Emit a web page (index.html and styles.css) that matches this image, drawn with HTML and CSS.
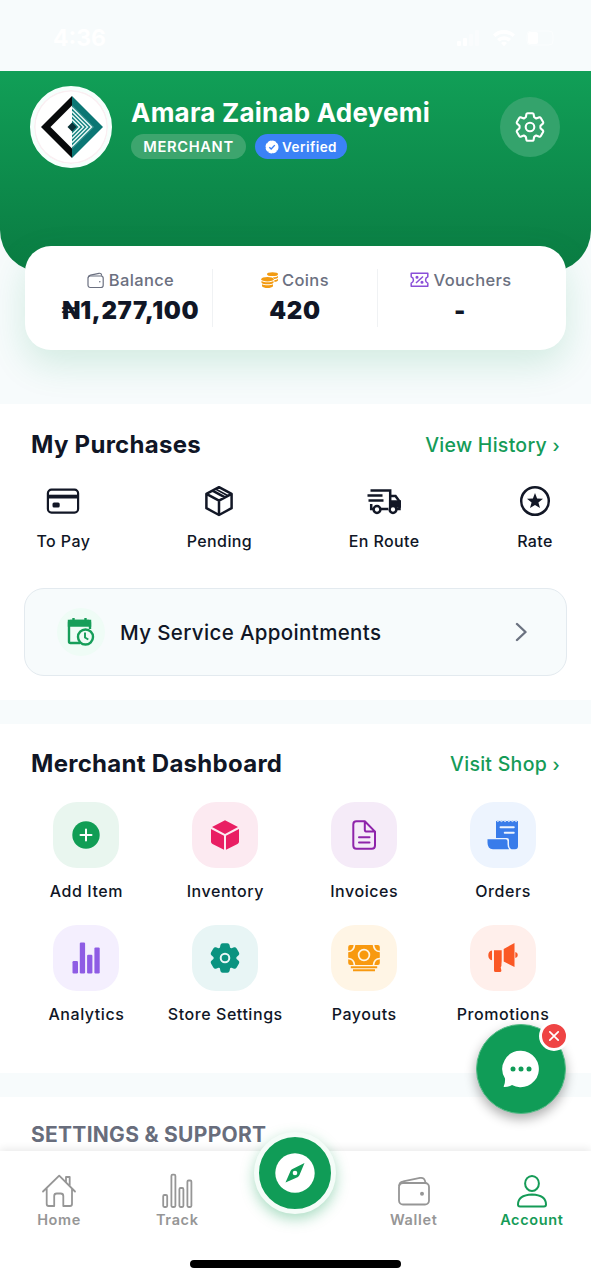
FILE: index.html
```html
<!DOCTYPE html>
<html lang="en">
<head>
<meta charset="utf-8">
<title>Account</title>
<link rel="stylesheet" href="styles.css">
</head>
<body>
<svg class="defs" width="0" height="0" aria-hidden="true">
  <symbol id="cog" viewBox="-16 -16 32 32">
    <path stroke-linejoin="round" d="M-2.400-13.800H2.400Q3.400-13.800 3.600-12.900L4.100-10Q4.300-9.600 6.200-8.500L9.400-9.700Q10.200-9.900 10.800-9L13.100-5Q13.600-4.100 12.900-3.400L10.700-1.500Q10.400-1.100 10.400 0T10.700 1.500L12.900 3.400Q13.600 4.100 13.100 5L10.800 9Q10.200 9.900 9.400 9.700L6.200 8.500Q4.300 9.600 4.100 10L3.600 12.900Q3.400 13.800 2.400 13.800H-2.400Q-3.400 13.800-3.600 12.900L-4.100 10Q-4.300 9.600-6.200 8.500L-9.400 9.700Q-10.200 9.900-10.800 9L-13.100 5Q-13.600 4.100-12.900 3.400L-10.700 1.500Q-10.400 1.100-10.400 0T-10.700-1.500L-12.900-3.400Q-13.600-4.100-13.100-5L-10.800-9Q-10.200-9.900-9.400-9.700L-6.200-8.500Q-4.300-9.600-4.100-10L-3.600-12.900Q-3.400-13.800-2.400-13.800z"/>
  </symbol>
</svg>
<div class="screen">
  <div class="statusbar">
    <span class="time">4:36</span>
    <svg width="98" height="20" viewBox="0 0 98 20" fill="#fff">
      <rect x="0" y="13" width="4" height="5" rx="1"/><rect x="6" y="10" width="4" height="8" rx="1"/>
      <g opacity=".4"><rect x="12" y="6" width="4" height="12" rx="1"/><rect x="18" y="2" width="4" height="16" rx="1"/></g>
      <path d="M36 6.500a16 16 0 0 1 22 0l-2.400 2.600a12.500 12.500 0 0 0-17.200 0z"/><path d="M40 11a10 10 0 0 1 14 0l-2.400 2.500a6.600 6.600 0 0 0-9.200 0z"/><path d="M44 15a4.500 4.500 0 0 1 6 0l-3 3.200z"/>
      <rect x="70" y="3" width="26" height="14" rx="4" fill="none" stroke="#fff" opacity=".5"/><rect x="71" y="4" width="10" height="12" rx="2"/>
    </svg>
  </div>

  <header class="hero">
    <div class="avatar">
      <svg width="62" height="62" viewBox="0 0 62 62">
        <path d="M31 0 62 31 31 62V52.500L52.500 31 31 9.500z" fill="#0b7674"/>
        <path d="M31 9.500 52.500 31 31 52.500z" fill="#11807e"/>
        <g fill="none" stroke="#e8f8f6" stroke-width="1.500"><path d="M31 11.500 50.500 31 31 50.500"/><path d="M31 15.500 46.500 31 31 46.500"/><path d="M31 19.500 42.500 31 31 42.500"/><path d="M31 23.500 38.500 31 31 38.500"/></g>
        <path d="M31 0V9.500L9.500 31 31 52.500V62L0 31z" fill="#080a0b"/>
        <path d="M31 26.500 35.500 31 31 35.500 26.500 31z" fill="#0b3136"/>
      </svg>
    </div>
    <div class="identity">
      <h1 class="name">Amara Zainab Adeyemi</h1>
      <div class="badges">
        <span class="badge role">MERCHANT</span>
        <span class="badge verified">
          <svg width="14" height="14" viewBox="0 0 14 14"><circle cx="7" cy="7" r="5.700" fill="#fff"/><circle cx="7" cy="7" r="5.700" fill="none" stroke="#fff" stroke-width="1.600" stroke-dasharray="2.900 1.577" stroke-linecap="round"/><path d="M4.300 7.200 6.200 9l3.600-3.900" fill="none" stroke="#3b82f6" stroke-width="1.400"/></svg>
          <span>Verified</span>
        </span>
      </div>
    </div>
    <button class="settings-btn" aria-label="Settings">
      <svg width="32" height="32" viewBox="0 0 32 32" fill="none" stroke="#fff"><use href="#cog" width="32" height="32" stroke-width="2.100"/><circle cx="16" cy="16" r="4.300" stroke-width="2.100"/></svg>
    </button>
  </header>

  <section class="stats">
    <div class="stat">
      <div class="stat-label">
        <svg width="18" height="17" viewBox="0 0 18 17" fill="none" stroke="#6b7080" stroke-width="1.200"><rect x="1" y="4" width="15.200" height="11.500" rx="2.200"/><path d="M1.200 5.500C1.300 4 2 3.400 3.500 3.100L12 1.300c1.700-.3 2.500.3 2.700 2.500"/><circle cx="12.800" cy="9.700" r=".8" fill="#6b7080" stroke="none"/></svg>
        <span>Balance</span>
      </div>
      <div class="stat-value">₦1,277,100</div>
    </div>
    <div class="stat">
      <div class="stat-label coins">
        <svg width="18" height="17" viewBox="0 0 18 17" fill="#f29b12"><ellipse cx="11.500" cy="2.200" rx="5.500" ry="1.900"/><path d="M12 5.300c2.500 0 4.500-.5 5-1.600v1.700c-.4.700-1.800 1.300-4 1.500zM13.200 8.200c2-.2 3.300-.7 3.800-1.400v1.700c-.5.700-1.800 1.200-3.500 1.400z"/><ellipse cx="6.500" cy="7.200" rx="6.200" ry="2.300"/><path d="M.5 9c2.500 1.800 9.500 1.800 12 0v1.700c-1.500 2-10.500 2-12 0zM1 12.300c2.500 1.300 8.500 1.300 11 0v1.900c-1.500 2.400-9.500 2.400-11 0z"/></svg>
        <span>Coins</span>
      </div>
      <div class="stat-value">420</div>
    </div>
    <div class="stat">
      <div class="stat-label vouchers">
        <svg width="19" height="16" viewBox="0 0 19 16" fill="none" stroke="#8a4fd8" stroke-width="1.500"><path d="M1.200 1.200h16.600v3.600a3.400 3.400 0 0 0 0 6.400v3.100H1.200v-3.100a3.400 3.400 0 0 0 0-6.400z" stroke-linejoin="round"/><path d="m6 11 7-6.500"/><circle cx="7" cy="5.300" r=".8"/><circle cx="12" cy="10.300" r=".8"/></svg>
        <span>Vouchers</span>
      </div>
      <div class="stat-value">-</div>
    </div>
  </section>

  <section class="panel purchases">
    <div class="panel-head"><h2>My Purchases</h2><a class="link">View History <span class="arrow">›</span></a></div>
    <div class="orders-row">
      <div class="order-item">
        <svg width="36" height="34" viewBox="0 0 36 34" fill="none" stroke="#121726" stroke-width="2.200"><rect x="2.900" y="5.600" width="30.200" height="23" rx="3.600"/><path d="M3 12.600h30" stroke-width="3.800"/><rect x="7.500" y="18.500" width="7.200" height="5" rx="1.500" fill="#121726" stroke="none"/></svg>
        <span>To Pay</span>
      </div>
      <div class="order-item">
        <svg width="36" height="34" viewBox="0 0 36 34" fill="none" stroke="#121726" stroke-width="2.500" stroke-linejoin="round"><path d="M18 3.200 30.600 9.800V24.200L18 31 5.400 24.200V9.800zM5.400 9.800 18 16.600 30.600 9.800M18 16.600V31M11.500 6.600 24 13.300"/><path d="M14.500 5 27 11.700" stroke-width="1.600"/></svg>
        <span>Pending</span>
      </div>
      <div class="order-item">
        <svg width="36" height="34" viewBox="0 0 36 34" fill="none" stroke="#121726" stroke-width="2.500"><path d="M4.500 6.500H24.200V24M1.500 11.600h15M2.500 16.500h15M5.200 20v5h3.300M14.500 25h7.500M24.200 12h5.300l4 5.500V25h-3"/><path d="M24.200 17.500h9.500v5h-9.500z" fill="#121726"/><circle cx="11" cy="25.500" r="3.400" fill="#fff"/><circle cx="27" cy="25.500" r="3.400" fill="#fff"/></svg>
        <span>En Route</span>
      </div>
      <div class="order-item">
        <svg width="36" height="34" viewBox="0 0 36 34"><circle cx="18" cy="17" r="13.800" fill="none" stroke="#121726" stroke-width="2.500"/><path d="m18 9 2.100 5.400 5.900.3-4.600 3.700 1.600 5.700-5-3.200-5 3.200 1.600-5.700-4.600-3.700 5.900-.3z" fill="#121726"/></svg>
        <span>Rate</span>
      </div>
    </div>
    <div class="appointments">
      <span class="appt-icon">
        <svg width="28" height="30" viewBox="0 0 28 30" fill="none" stroke="#169e59" stroke-width="2.400"><path d="M13 26H3.500Q2 26 2 24.500V5.500Q2 4 3.500 4h18Q23 4 23 5.500V12"/><path d="M2 4h21v4.500H2zM6.500 1v4M18.500 1v4" fill="#169e59"/><circle cx="18.500" cy="20" r="7.500" fill="#effcf6"/><path d="M18 15.500v5l3.300 2" stroke-width="1.900"/></svg>
      </span>
      <span class="appt-text">My Service Appointments</span>
      <svg class="chevron" width="12" height="20" viewBox="0 0 12 20" fill="none" stroke="#6b7280" stroke-width="2.400" stroke-linecap="round" stroke-linejoin="round"><path d="m2 2 8.500 8L2 18"/></svg>
    </div>
  </section>

  <section class="panel dashboard">
    <div class="panel-head"><h2>Merchant Dashboard</h2><a class="link">Visit Shop <span class="arrow">›</span></a></div>
    <div class="tiles">
      <div class="tile"><span class="tile-icon green">
        <svg width="34" height="34" viewBox="0 0 34 34"><circle cx="17" cy="17" r="13.700" fill="#119d55"/><path d="M17 11.500v11M11.500 17h11" stroke="#fff" stroke-width="2" stroke-linecap="round"/></svg></span><span>Add Item</span></div>
      <div class="tile"><span class="tile-icon pink">
        <svg width="34" height="34" viewBox="0 0 34 34" fill="#e91e63"><path d="M17 2.200 30 9 17 16 4 9zM3 11l13 6.800v14L4.500 26Q3 25 3 23.800zM31 11l-13 6.800v14L29.500 26Q31 25 31 23.800z"/></svg></span><span>Inventory</span></div>
      <div class="tile"><span class="tile-icon purple">
        <svg width="34" height="34" viewBox="0 0 34 34" fill="none" stroke="#8e24aa" stroke-width="2" stroke-linecap="round" stroke-linejoin="round"><path d="M9.500 3.200h8.300L28 13.600v13.900q0 3.200-3.200 3.200H9.500q-3.200 0-3.200-3.200V6.400q0-3.200 3.200-3.200zM17.800 3.200v8.200q0 2.200 2.200 2.200h8M12 19.200h10.500M12 24.500h10.500"/></svg></span><span>Invoices</span></div>
      <div class="tile"><span class="tile-icon blue">
        <svg width="34" height="34" viewBox="0 0 34 34"><path d="M10 2.800h22v25.500q0 3-3 3h-3.500q-2.500-1-2.500-5V22q0-2-2-2H10z" fill="#397cea"/><path d="M1.500 21.200h18q2 0 2 2v3q0 3.500 1.700 5H7q-5.500-.3-5.500-6.500z" fill="#397cea"/><path d="M14.500 9.300h13.300M18.700 14.700h9.100" stroke="#edf4fe" stroke-width="1.900" stroke-linecap="round"/><path d="M10 2.200l1.800 1.400 1.800-1.400 1.900 1.400 1.800-1.400 1.800 1.400 1.900-1.400 1.800 1.400 1.800-1.400 1.900 1.400 1.800-1.400L30.200 3.600 32 2.200" fill="none" stroke="#edf4fe"/></svg></span><span>Orders</span></div>
      <div class="tile"><span class="tile-icon violet">
        <svg width="34" height="34" viewBox="0 0 34 34" fill="#8e5ce4"><rect x="3.500" y="20" width="5.500" height="12.500" rx="1.200"/><rect x="10.800" y="1.500" width="5.300" height="31" rx="1.200"/><rect x="18.100" y="13.700" width="5.300" height="18.800" rx="1.200"/><rect x="25.400" y="6.400" width="5.300" height="26.100" rx="1.200"/></svg></span><span>Analytics</span></div>
      <div class="tile"><span class="tile-icon teal">
        <svg width="34" height="34" viewBox="0 0 34 34" fill="#0b9380" stroke="#0b9380"><use href="#cog" x="1" y="1" width="32" height="32" stroke-width="2"/><circle cx="17" cy="17" r="4.300" stroke="#e8f6f6" stroke-width="2"/></svg></span><span>Store Settings</span></div>
      <div class="tile"><span class="tile-icon amber">
        <svg width="34" height="34" viewBox="0 0 34 34"><rect x="1.200" y="4" width="31.600" height="20" rx="2" fill="#f8990f"/><g fill="none" stroke="#fff5e5" stroke-width="1.700"><circle cx="17" cy="14" r="5.400"/><path d="M1 10.500q6 0 6.500-6.800M33 10.500q-6 0-6.500-6.800M1 17.500q6 0 6.500 6.800M33 17.500q-6 0-6.500 6.800"/></g><path d="M3.800 26.300h26.400M6 29.300h22" stroke="#f8990f" stroke-width="1.900"/></svg></span><span>Payouts</span></div>
      <div class="tile"><span class="tile-icon orange">
        <svg width="34" height="34" viewBox="0 0 34 34" fill="#fa5825"><path d="M28.500 2v24L17.700 20.500V8zM29.300 11q2.500.7 2.500 3t-2.500 3zM6 9.500v9.800Q2.300 18.500 2.300 14.300T6 9.500zM8 9.200h7.700V20q-.3 3-.3 5l-.7 1.500.7 3q0 1.500-1.500 1.500h-4.400Q8 31 8 29.500z"/></svg></span><span>Promotions</span></div>
    </div>
  </section>

  <section class="panel support"><h3>SETTINGS &amp; SUPPORT</h3></section>

  <nav class="tabbar">
    <a class="tab"><svg width="36" height="36" viewBox="0 0 36 36" fill="none" stroke="#969696" stroke-width="1.800" stroke-linejoin="round" stroke-linecap="round"><path d="M2 18.500 18.200 2.700 34 18.500M5.700 15.500V31q0 2 2 2h5.500V23q0-2.500 2.500-2.500h4Q22.300 20.500 22.300 23v10H29q2 0 2-2V15.500M25 9.200V4h3.700v9"/></svg><span>Home</span></a>
    <a class="tab"><svg width="36" height="36" viewBox="0 0 36 36" fill="none" stroke="#969696" stroke-width="1.800"><rect x="4.200" y="22" width="4" height="12" rx="1.200"/><rect x="12.400" y="1.700" width="4" height="32.300" rx="1.200"/><rect x="20.400" y="15" width="4" height="19" rx="1.200"/><rect x="28.400" y="7.500" width="4" height="26.500" rx="1.200"/></svg><span>Track</span></a>
    <span class="tab"></span>
    <a class="tab"><svg width="36" height="36" viewBox="0 0 36 36" fill="none" stroke="#969696" stroke-width="1.800"><rect x="3" y="10" width="30" height="21.500" rx="4"/><path d="M3.200 13q0-4 4-4.700L24 4.900q4.700-.9 5.500 5"/><circle cx="26" cy="20.800" r="2" fill="#969696" stroke="none"/></svg><span>Wallet</span></a>
    <a class="tab active"><svg width="36" height="36" viewBox="0 0 36 36" fill="none" stroke="#159b57" stroke-width="2"><ellipse cx="18" cy="10.400" rx="6.900" ry="7.500"/><path d="M4 31.500Q4 22 18 21.500q14 .5 14 10 0 2-2 2H6q-2 0-2-2z"/></svg><span>Account</span></a>
    <div class="home-indicator"></div>
  </nav>

  <button class="explore" aria-label="Explore">
    <svg width="40" height="40" viewBox="0 0 40 40"><circle cx="20" cy="20" r="19.700" fill="#fff"/><path d="M29.500 10 24.500 22q-.6 1.500-2 2.200L10.500 29.500 15.500 18q.7-1.400 2-2z" fill="#109c57"/><circle cx="20" cy="20" r="2.300" fill="#fff"/></svg>
  </button>
  <button class="chat" aria-label="Chat">
    <svg width="40" height="40" viewBox="0 0 40 40"><path d="M20 1.800A18.200 18.200 0 1 1 11 36q-3.500 2-7.500 2Q2.200 38 3 36.500q1.300-3 1-7A18.200 18.200 0 0 1 20 1.800z" fill="#fff"/><g fill="#109c57"><circle cx="12" cy="20" r="2.500"/><circle cx="20" cy="20" r="2.500"/><circle cx="28" cy="20" r="2.500"/></g></svg>
  </button>
  <button class="chat-close" aria-label="Close">
    <svg width="12" height="12" viewBox="0 0 12 12" stroke="#fff" stroke-width="1.700" stroke-linecap="round"><path d="m1.800 1.800 8.400 8.400M10.200 1.800 1.800 10.200"/></svg>
  </button>
</div>
</body>
</html>
```

FILE: styles.css
```css
* { box-sizing: border-box; }
body { margin: 0; font-family: Inter, "Noto Sans", sans-serif; color: #101626; }
h1, h2, h3 { margin: 0; }
svg { display: block; flex: none; }
.defs { position: absolute; }
button { border: 0; padding: 0; display: flex; align-items: center; justify-content: center; }
.screen { position: relative; width: 591px; height: 1280px; overflow: hidden; background: #f7fbfc; }

.statusbar { height: 71px; padding: 5px 36px 0 53px; display: flex; align-items: center; justify-content: space-between; }
.time { color: #fff; font-size: 23px; font-weight: 700; }

.hero { height: 201px; padding: 15px 31px 0 30px; display: flex; align-items: flex-start; border-radius: 0 0 42px 42px; background: linear-gradient(#119f57, #0a7b42); }
.avatar { width: 82px; height: 82px; border-radius: 50%; border: 4px solid #f5fffc; background: #fff; box-shadow: inset 0 0 0 1.500px #faeff2; display: flex; align-items: center; justify-content: center; flex: none; }
.avatar svg { margin-left: 1px; }
.identity { margin-left: 19px; padding-top: 10px; flex: 1; }
.name { color: #fff; font-size: 26px; line-height: 33px; font-weight: 650; letter-spacing: .22px; white-space: nowrap; }
.badges { display: flex; gap: 9px; margin-top: 5px; }
.badge { height: 25px; border-radius: 13px; color: #fff; font-weight: 600; display: flex; align-items: center; justify-content: center; }
.role { width: 115px; background: #3da56e; font-size: 14.700px; letter-spacing: .65px; }
.verified { width: 92px; background: #3b82f6; font-size: 13.500px; letter-spacing: .45px; gap: 3px; }
.settings-btn { width: 60px; height: 60px; margin-top: 11px; border-radius: 50%; background: #34a36c; }

.stats { position: relative; width: 541px; height: 104px; margin: -26px auto 0; padding: 23px 24px; border-radius: 26px; background: #fff; display: grid; grid-template-columns: 164px 165px 164px; box-shadow: 0 14px 36px rgba(16, 157, 87, .16); }
.stat { height: 58px; display: flex; flex-direction: column; align-items: center; border-right: 1px solid #f0f2f4; }
.stat:last-child { border: 0; }
.stat-label { height: 23px; display: flex; align-items: center; gap: 4px; color: #6b7080; font-size: 16.500px; font-weight: 500; letter-spacing: .35px; }
.coins { gap: 3px; }
.vouchers { gap: 5px; padding-left: 1px; }
.stat-value { margin-top: 4px; line-height: 32px; font-size: 24px; font-weight: 900; letter-spacing: .65px; white-space: nowrap; }

.panel { background: #fff; }
.panel-head { display: flex; align-items: center; justify-content: space-between; padding: 0 31px; height: 32px; }
h2 { font-size: 24px; font-weight: 720; letter-spacing: .28px; }
.link { padding-top: 2px; color: #159b57; font-size: 19.500px; font-weight: 520; letter-spacing: .28px; }
.arrow { font-size: 18px; }
.purchases { height: 296px; margin-top: 54px; padding-top: 24px; }
.orders-row { margin-top: 24px; padding: 0 38px 0 36.500px; display: flex; justify-content: space-between; }
.order-item { display: flex; flex-direction: column; align-items: center; font-size: 16px; line-height: 22px; font-weight: 500; letter-spacing: .4px; gap: 12px; }
.order-item:nth-child(2), .order-item:nth-child(3) { margin-left: -1px; }
.appointments { height: 88px; margin: 36px 24px 0; padding: 0 39px 0 32px; border: 1.500px solid #e3eaef; border-radius: 20px; background: #f7fbfc; display: flex; align-items: center; }
.appt-icon { width: 48px; height: 48px; border-radius: 50%; background: #effcf6; display: flex; align-items: center; justify-content: center; }
.appt-text { flex: 1; margin-left: 15px; font-size: 20.500px; font-weight: 520; letter-spacing: .36px; }

.dashboard { height: 349px; margin-top: 24px; padding-top: 23px; }
.tiles { margin-top: 23px; padding: 0 18.500px 0 17px; display: grid; grid-template-columns: repeat(4, 1fr); row-gap: 24px; }
.tile { height: 99px; display: flex; flex-direction: column; align-items: center; gap: 12px; font-size: 16px; line-height: 23px; font-weight: 500; letter-spacing: .55px; white-space: nowrap; }
.tile-icon { width: 66px; height: 66px; border-radius: 24px; display: flex; align-items: center; justify-content: center; flex: none; }
.green { background: #e9f6ef; }
.pink { background: #fceaf1; }
.purple { background: #f5ebf8; }
.blue { background: #edf4fe; }
.violet { background: #f4effe; }
.teal { background: #e8f5f5; }
.amber { background: #fff5e5; }
.orange { background: #ffefeb; }

.support { height: 183px; margin-top: 24px; padding: 24px 31px; }
h3 { color: #686d7c; font-size: 21px; line-height: 28px; font-weight: 650; letter-spacing: .28px; }

.tabbar { position: absolute; left: 0; bottom: 0; width: 100%; height: 129px; padding-top: 22px; background: #fff; display: grid; grid-template-columns: repeat(5, 1fr); grid-template-rows: 60px 1fr; box-shadow: 0 -2px 8px rgba(0, 0, 0, .09); }
.tab { display: flex; flex-direction: column; align-items: center; gap: 1px; color: #969696; font-size: 14.500px; line-height: 20px; font-weight: 620; letter-spacing: .65px; }
.active { color: #159b57; }
.home-indicator { grid-column: 1 / -1; justify-self: center; align-self: end; width: 211px; height: 8px; margin-bottom: 12px; border-radius: 4px; background: #000; }

.explore { position: absolute; left: 254px; top: 1132px; width: 82px; height: 82px; border: 5px solid #f4fcf8; border-radius: 50%; background: #109c57; box-shadow: 0 5px 14px rgba(16, 157, 87, .36); }
.chat { position: absolute; left: 476px; top: 1024px; width: 90px; height: 90px; border: 1.500px solid #54bb86; border-radius: 50%; background: #109c57; box-shadow: 0 5px 12px rgba(0, 0, 0, .32); }
.chat-close { position: absolute; left: 539px; top: 1021px; width: 30px; height: 30px; border: 3px solid #fff; border-radius: 50%; background: #ef4444; }
```
